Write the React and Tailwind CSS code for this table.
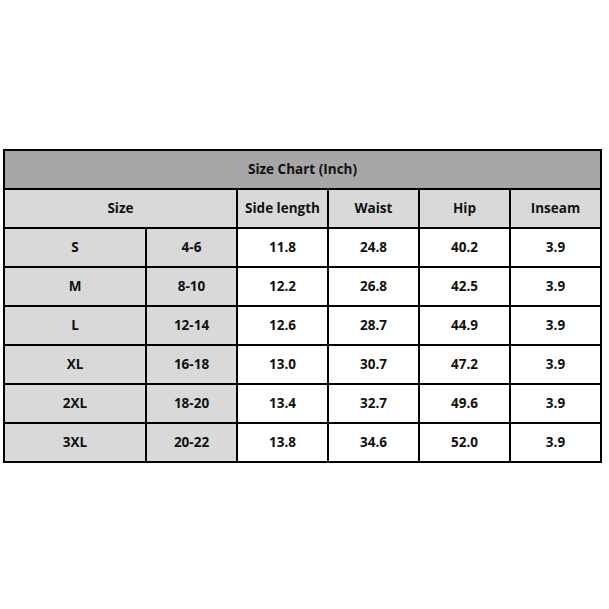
const rows = [
  ["S", "4-6", "11.8", "24.8", "40.2", "3.9"],
  ["M", "8-10", "12.2", "26.8", "42.5", "3.9"],
  ["L", "12-14", "12.6", "28.7", "44.9", "3.9"],
  ["XL", "16-18", "13.0", "30.7", "47.2", "3.9"],
  ["2XL", "18-20", "13.4", "32.7", "49.6", "3.9"],
  ["3XL", "20-22", "13.8", "34.6", "52.0", "3.9"],
];

const cell = "h-[37px] flex items-center justify-center";

export default function App() {
  return (
    <div className="w-[609px] h-[609px] bg-white pt-[149px] pl-[3px] font-['Open_Sans',sans-serif] font-bold text-[13.5px] text-[#111]">
      <div className="w-[599px] bg-black p-[2px] grid grid-cols-[140px_89px_89px_89px_89px_89px] gap-[2px]">
        {/* title row */}
        <div className={`${cell} col-span-6 bg-[#a6a6a6]`}>Size Chart (Inch)</div>

        {/* column headings */}
        <div className={`${cell} col-span-2 bg-[#d9d9d9]`}>Size</div>
        <div className={`${cell} bg-[#d9d9d9]`}>Side length</div>
        <div className={`${cell} bg-[#d9d9d9]`}>Waist</div>
        <div className={`${cell} bg-[#d9d9d9]`}>Hip</div>
        <div className={`${cell} bg-[#d9d9d9]`}>Inseam</div>

        {rows.map((r) =>
          r.map((v, i) => (
            <div
              key={r[0] + i}
              className={`${cell} ${i < 2 ? "bg-[#d9d9d9]" : "bg-white"}`}
            >
              {v}
            </div>
          ))
        )}
      </div>
    </div>
  );
}
